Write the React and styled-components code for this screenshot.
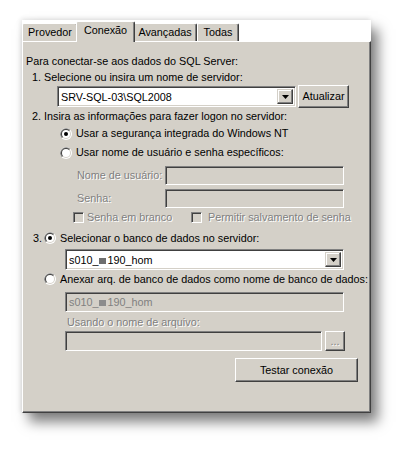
import React from 'react';
import styled, { createGlobalStyle } from 'styled-components';

const FACE = '#D4D0C8';
const DARK = '#404040';
const SHADOW = '#808080';

const Global = createGlobalStyle`
  html, body { margin: 0; padding: 0; background: #fff; }
  body {
    font-family: 'Liberation Sans', Tahoma, Arial, sans-serif;
    font-size: 10.8px;
    color: #000;
  }
`;

const Page = styled.div`
  box-sizing: border-box;
  width: 412px;
  height: 455px;
  padding: 20px 0 0 22px;
  overflow: hidden;
`;

const Dialog = styled.div`
  width: 349px;
  background: #fff;
  box-shadow: 7px 9px 12px rgba(0, 0, 0, 0.5), -1px -1px 5px rgba(0, 0, 0, 0.12);
`;

const TabRow = styled.div`
  display: flex;
  align-items: flex-end;
  height: 21px;
  position: relative;
  z-index: 1;
`;

const Tab = styled.div`
  box-sizing: border-box;
  width: ${(p) => p.$w}px;
  height: ${(p) => (p.$active ? 21 : 18)}px;
  margin: 0 ${(p) => (p.$active ? -2 : 0)}px ${(p) => (p.$active ? -1 : 0)}px
    ${(p) => (p.$active ? -2 : 0)}px;
  position: relative;
  z-index: ${(p) => (p.$active ? 2 : 1)};
  background: ${FACE};
  border-top: 1px solid #fff;
  border-left: 1px solid #fff;
  border-right: 1px solid ${DARK};
  border-radius: 2px 2px 0 0;
  box-shadow: inset -1px 0 ${SHADOW};
  padding-top: 2px;
  line-height: 13px;
  text-align: center;
  white-space: nowrap;
`;

const Panel = styled.div`
  box-sizing: border-box;
  height: 372px;
  background: ${FACE};
  border: 1px solid;
  border-color: #fff ${DARK} ${DARK} #fff;
  box-shadow: inset -1px -1px ${SHADOW};
  display: flex;
  flex-direction: column;
  align-items: flex-start;
`;

const Line = styled.div`
  height: 13px;
  line-height: 13px;
  margin-top: ${(p) => p.$mt}px;
  margin-left: ${(p) => p.$ml}px;
  white-space: nowrap;
  color: ${(p) => (p.$disabled ? SHADOW : '#000')};
  text-shadow: ${(p) => (p.$disabled ? '1px 1px 0 #fff' : 'none')};
`;

const Row = styled.div`
  display: flex;
  align-items: center;
  height: ${(p) => p.$h}px;
  margin-top: ${(p) => p.$mt}px;
  margin-left: ${(p) => p.$ml}px;
  gap: ${(p) => p.$gap || 0}px;
  white-space: nowrap;
`;

const Label = styled.span`
  display: inline-block;
  width: ${(p) => (p.$w ? `${p.$w}px` : 'auto')};
  margin-left: ${(p) => p.$ml || 0}px;
  line-height: 13px;
  color: ${(p) => (p.$disabled ? SHADOW : '#000')};
  text-shadow: ${(p) => (p.$disabled ? '1px 1px 0 #fff' : 'none')};
`;

const Sunken = styled.div`
  box-sizing: border-box;
  width: ${(p) => p.$w}px;
  height: ${(p) => p.$h}px;
  margin-left: ${(p) => p.$ml || 0}px;
  margin-top: ${(p) => p.$mt || 0}px;
  background: ${(p) => (p.$disabled ? FACE : '#fff')};
  border: 1px solid;
  border-color: ${SHADOW} #fff #fff ${SHADOW};
  box-shadow: inset 1px 1px ${DARK}, inset -1px -1px ${FACE};
  display: flex;
  align-items: center;
  padding-left: 3px;
  padding-right: ${(p) => (p.$combo ? 0 : 3)}px;
  line-height: 13px;
  white-space: nowrap;
  color: ${(p) => (p.$disabled ? SHADOW : '#000')};
  flex-shrink: 0;
`;

const ComboText = styled.span`
  flex: 1;
  padding-top: 1px;
`;

const DropBtn = styled.div`
  box-sizing: border-box;
  width: 16px;
  margin: 2px 2px 2px 0;
  align-self: stretch;
  background: ${FACE};
  border: 1px solid;
  border-color: ${FACE} ${DARK} ${DARK} ${FACE};
  box-shadow: inset -1px -1px ${SHADOW}, inset 1px 1px #fff;
  display: flex;
  align-items: center;
  justify-content: center;
`;

const Button = styled.div`
  box-sizing: border-box;
  width: ${(p) => p.$w}px;
  height: ${(p) => p.$h}px;
  margin-left: ${(p) => p.$ml || 0}px;
  margin-top: ${(p) => p.$mt || 0}px;
  background: ${FACE};
  border: 1px solid;
  border-color: #fff ${DARK} ${DARK} #fff;
  box-shadow: inset -1px -1px ${SHADOW}, inset 1px 1px ${FACE};
  display: flex;
  align-items: center;
  justify-content: center;
  line-height: 13px;
  white-space: nowrap;
  flex-shrink: 0;
  color: ${(p) => (p.$disabled ? SHADOW : '#000')};
  text-shadow: ${(p) => (p.$disabled ? '1px 1px 0 #fff' : 'none')};
`;

const Check = styled.span`
  box-sizing: border-box;
  display: inline-block;
  width: 11px;
  height: 11px;
  background: ${FACE};
  border: 1px solid;
  border-color: ${SHADOW} #fff #fff ${SHADOW};
  box-shadow: inset 1px 1px ${DARK}, inset -1px -1px ${FACE};
  flex-shrink: 0;
`;

const CheckItem = styled.div`
  display: flex;
  align-items: center;
  gap: ${(p) => p.$gap}px;
  width: ${(p) => (p.$w ? `${p.$w}px` : 'auto')};
`;

const Redact = styled.span`
  display: inline-block;
  width: 7px;
  height: 6px;
  margin: 0 1px;
  background: ${(p) => (p.$disabled ? '#8c8c8c' : '#6e6e6e')};
`;

const Num = styled.span`
  display: inline-block;
  width: ${(p) => p.$w}px;
`;

const Radio = ({ checked }) => (
  <svg width="12" height="12" viewBox="0 0 12 12" style={{ flexShrink: 0 }}>
    <circle cx="6" cy="6" r="6" fill="#fff" />
    <path d="M1.76 10.24 A6 6 0 0 1 10.24 1.76 L6 6Z" fill={SHADOW} />
    <circle cx="6" cy="6" r="5" fill={FACE} />
    <path d="M2.46 9.54 A5 5 0 0 1 9.54 2.46 L6 6Z" fill={DARK} />
    <circle cx="6" cy="6" r="4" fill="#fff" />
    {checked && <circle cx="6" cy="6" r="2" fill="#000" />}
  </svg>
);

const Arrow = () => (
  <svg width="7" height="4" viewBox="0 0 7 4">
    <path d="M0 0 H7 L3.5 4Z" fill="#000" />
  </svg>
);

const Combo = ({ w, ml, mt, children }) => (
  <Sunken $w={w} $h={21} $ml={ml} $mt={mt} $combo>
    <ComboText>{children}</ComboText>
    <DropBtn>
      <Arrow />
    </DropBtn>
  </Sunken>
);

export default function App() {
  return (
    <>
      <Global />
      <Page>
        <Dialog>
          <TabRow>
            <Tab $w={56}>Provedor</Tab>
            <Tab $w={59} $active>
              Conexão
            </Tab>
            <Tab $w={64}>Avançadas</Tab>
            <Tab $w={42}>Todas</Tab>
          </TabRow>
          <Panel>
            <Line $mt={13} $ml={3}>
              Para conectar-se aos dados do SQL Server:
            </Line>
            <Line $mt={3} $ml={9}>
              1. Selecione ou insira um nome de servidor:
            </Line>
            <Row $h={23} $mt={1} $ml={34} $gap={2}>
              <Combo w={239}>SRV-SQL-03\SQL2008</Combo>
              <Button $w={51} $h={23}>
                Atualizar
              </Button>
            </Row>
            <Line $mt={2} $ml={9}>
              2. Insira as informações para fazer logon no servidor:
            </Line>
            <Row $h={19} $mt={1} $ml={37} $gap={4}>
              <Radio checked />
              <Label>Usar a segurança integrada do Windows NT</Label>
            </Row>
            <Row $h={19} $mt={0} $ml={37} $gap={4}>
              <Radio />
              <Label>Usar nome de usuário e senha específicos:</Label>
            </Row>
            <Row $h={19} $mt={4} $ml={54}>
              <Label $w={88} $disabled>
                Nome de usuário:
              </Label>
              <Sunken $w={179} $h={19} $disabled />
            </Row>
            <Row $h={19} $mt={4} $ml={54}>
              <Label $w={88} $disabled>
                Senha:
              </Label>
              <Sunken $w={179} $h={19} $disabled />
            </Row>
            <Row $h={13} $mt={3} $ml={50}>
              <CheckItem $w={118} $gap={3}>
                <Check />
                <Label $disabled>Senha em branco</Label>
              </CheckItem>
              <CheckItem $gap={6}>
                <Check />
                <Label $disabled>Permitir salvamento de senha</Label>
              </CheckItem>
            </Row>
            <Row $h={16} $mt={6} $ml={10}>
              <Num $w={11}>3.</Num>
              <Radio checked />
              <Label $ml={4}>Selecionar o banco de dados no servidor:</Label>
            </Row>
            <Combo w={279} ml={42} mt={3}>
              s010_
              <Redact />
              190_hom
            </Combo>
            <Row $h={16} $mt={1} $ml={21} $gap={4}>
              <Radio />
              <Label>Anexar arq. de banco de dados como nome de banco de dados:</Label>
            </Row>
            <Sunken $w={279} $h={20} $ml={42} $mt={5} $disabled>
              <ComboText>
                s010_
                <Redact $disabled />
                190_hom
              </ComboText>
            </Sunken>
            <Line $mt={4} $ml={44} $disabled>
              Usando o nome de arquivo:
            </Line>
            <Row $h={20} $mt={2} $ml={42} $gap={3}>
              <Sunken $w={257} $h={20} $disabled />
              <Button $w={20} $h={20} $disabled>
                ...
              </Button>
            </Row>
            <Button $w={123} $h={24} $ml={212} $mt={7}>
              Testar conexão
            </Button>
          </Panel>
        </Dialog>
      </Page>
    </>
  );
}
